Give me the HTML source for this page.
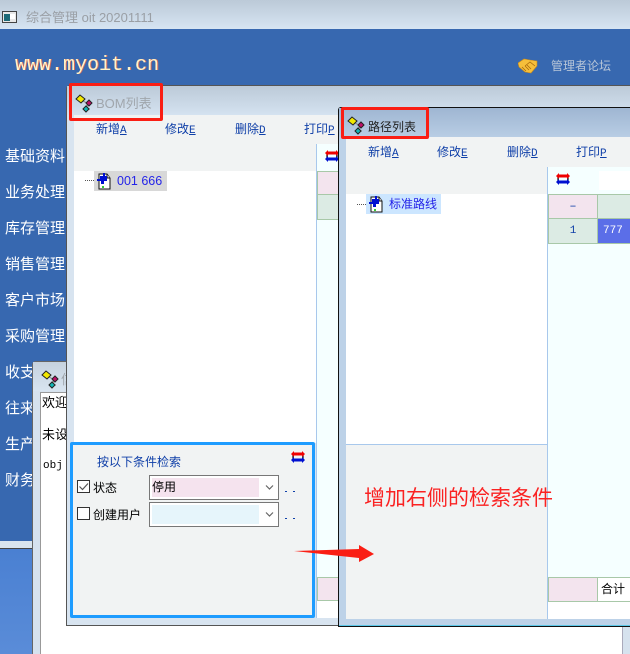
<!DOCTYPE html>
<html>
<head>
<meta charset="utf-8">
<style>
html,body{margin:0;padding:0;width:630px;height:654px;overflow:hidden}
body{position:relative;background:#3768b0;font-family:"Liberation Sans","WenQuanYi Zen Hei","Noto Sans CJK SC",sans-serif;font-size:13px}
div,svg,span{position:absolute;box-sizing:border-box}
.t{white-space:nowrap;line-height:16px}
.nav{left:5px;color:#fff;font-size:15px;line-height:18px;white-space:nowrap}
.tb{color:#0f3fa8;font-size:12px;line-height:14px;white-space:nowrap;font-family:"WenQuanYi Zen Hei","Noto Sans CJK SC",sans-serif}
.tb u{font-family:"Liberation Mono",monospace;font-size:11px}
</style>
</head>
<body>
<svg width="0" height="0" style="left:0;top:0">
<defs>
<g id="ico">
<path d="M6 6 L12 9 V15 H15 M12 12 L16 9" stroke="#8a8a8a" fill="none" stroke-width="1"/>
<path d="M1 5 L5 1 L10 5 L6 9 Z" fill="#f2e800" stroke="#222" stroke-width="1"/>
<path d="M11 9 L14 6 L17 9 L14 12 Z" fill="#c0106a" stroke="#222" stroke-width="1"/>
<path d="M8 15 L11 12 L14 15 L11 18 Z" fill="#10b8b8" stroke="#222" stroke-width="1"/>
</g>
<g id="swap">
<path d="M2 3 H12 V9 H2 Z" fill="none" stroke="#111" stroke-width="1.2"/>
<path d="M0 3 L3 0 V1.5 H11 V0 L14 3 L11 6 V4.5 H3 V6 Z" fill="#f00000"/>
<path d="M0 9 L3 6 V7.5 H11 V6 L14 9 L11 12 V10.5 H3 V12 Z" fill="#0010d0"/>
</g>
<g id="doc">
<path d="M2 1 H10 L13 5 V16 H2 Z" fill="#fff" stroke="#111" stroke-width="1"/>
<path d="M10 1 V5 H13" fill="#ddd" stroke="#111" stroke-width="1"/>
<path d="M0 6 H3 V3 H6 V0 H8 V3 H10 V8 H7 V11 H4 V8 H0 Z" fill="#0010d0"/>
<rect x="5" y="13" width="2" height="2" fill="#3c3"/>
</g>
</defs>
</svg>

<!-- app title -->
<div style="left:0;top:0;width:630px;height:29px;background:linear-gradient(#bccad8,#d6e4f2)"></div>
<svg style="left:2px;top:11px" width="15" height="12"><rect x=".5" y=".5" width="14" height="11" fill="#e8e8e8" stroke="#444"/><rect x="2" y="3" width="6" height="7" fill="#1c6a78"/><rect x="8" y="3" width="5" height="5" fill="#fff"/></svg>
<div class="t" style="left:26px;top:10px;color:#9a9fa5;font-size:13px">综合管理 oit 20201111</div>

<!-- header -->
<div class="t" style="left:15px;top:55px;font-family:'Liberation Mono',monospace;font-size:20px;line-height:22px;color:#fff4c8;text-shadow:1px 0 0 #d86a5a">www.myoit.cn</div>
<svg style="left:518px;top:58px" width="20" height="16"><path d="M0 5 L6 1 L12 2 L19 3 L19 8 L13 15 L7 14 L1 9 Z" fill="#f6bf3a" stroke="#c98a1a" stroke-width=".6"/><path d="M7 8 L12 4 L17 8 M4 9 L8 13 M7 8 L11 12 M9 7 L13 11" stroke="#a8690d" fill="none" stroke-width=".8"/></svg>
<div class="t" style="left:551px;top:58px;color:#b8c6d8;font-size:12px">管理者论坛</div>

<!-- sidebar -->
<div class="nav" style="top:148px">基础资料</div>
<div class="nav" style="top:184px">业务处理</div>
<div class="nav" style="top:220px">库存管理</div>
<div class="nav" style="top:256px">销售管理</div>
<div class="nav" style="top:292px">客户市场</div>
<div class="nav" style="top:328px">采购管理</div>
<div class="nav" style="top:364px">收支</div>
<div class="nav" style="top:400px">往来</div>
<div class="nav" style="top:436px">生产</div>
<div class="nav" style="top:472px">财务</div>

<!-- lower strip -->
<div style="left:0;top:541px;width:40px;height:7px;background:#d8e4ee"></div>
<div style="left:0;top:548px;width:40px;height:1px;background:#444"></div>
<div style="left:0;top:549px;width:40px;height:105px;background:linear-gradient(#4a80d2,#5a8cd8)"></div>

<!-- welcome window -->
<div style="left:32px;top:361px;width:598px;height:293px;background:#d6e2ee;border:1px solid #666;border-width:1px 0 0 1px;border-radius:4px 0 0 0"></div>
<div style="left:33px;top:362px;width:40px;height:29px;background:linear-gradient(#c6d2de,#d8e4f0)"></div>
<svg style="left:41px;top:370px" width="18" height="19"><use href="#ico"/></svg>
<div class="t" style="left:61px;top:372px;color:#a0a6ac;font-size:13px">信</div>
<div style="left:40px;top:392px;width:582px;height:262px;background:#fff;border-left:1px solid #999;border-top:1px solid #999"></div>
<div style="left:622px;top:627px;width:8px;height:27px;background:#d6e2ee;border-left:1px solid #aab"></div>
<div class="t" style="left:42px;top:395px;color:#000">欢迎</div>
<div class="t" style="left:42px;top:427px;color:#000">未设</div>
<div class="t" style="left:43px;top:458px;color:#000;font-family:'Liberation Mono',monospace;font-size:11px">obj</div>

<!-- BOM window -->
<div style="left:66px;top:85px;width:564px;height:541px;background:#d8e4f0;border:1px solid #555;border-right:0;border-radius:4px 0 0 0"></div>
<div style="left:67px;top:86px;width:563px;height:29px;background:linear-gradient(#bccad8,#d4e2f0)"></div>
<svg style="left:75px;top:94px" width="18" height="19"><use href="#ico"/></svg>
<div class="t" style="left:96px;top:96px;color:#a0a6ac;font-size:13px">BOM列表</div>
<div style="left:74px;top:115px;width:264px;height:56px;background:#f1f3f3"></div>
<div class="tb" style="left:96px;top:122px">新增<u>A</u></div>
<div class="tb" style="left:165px;top:122px">修改<u>E</u></div>
<div class="tb" style="left:235px;top:122px">删除<u>D</u></div>
<div class="tb" style="left:304px;top:122px">打印<u>P</u></div>
<div style="left:74px;top:171px;width:242px;height:272px;background:#fff"></div>
<div style="left:316px;top:144px;width:1px;height:474px;background:#a8c8ec"></div>
<div style="left:317px;top:144px;width:21px;height:474px;background:#f5ffff"></div>
<svg style="left:325px;top:150px" width="14" height="12"><use href="#swap"/></svg>
<div style="left:85px;top:180px;width:9px;border-top:1px dotted #555"></div>
<div style="left:94px;top:171px;width:73px;height:20px;background:#d8d8d8"></div>
<svg style="left:97px;top:173px" width="14" height="17"><use href="#doc"/></svg>
<div class="t" style="left:117px;top:173px;color:#2424e8;font-size:12.5px">001 666</div>
<div style="left:317px;top:171px;width:21px;height:24px;background:#f3e4ee;border:1px solid #a8c8a8;border-right:0"></div>
<div style="left:317px;top:195px;width:21px;height:25px;background:#dcebe4;border:1px solid #a8c8a8;border-top:0;border-right:0"></div>
<div style="left:317px;top:577px;width:21px;height:24px;background:#f3e4ee;border:1px solid #a8c8a8;border-right:0"></div>
<div style="left:317px;top:601px;width:21px;height:17px;background:#fff"></div>

<!-- search panel -->
<div style="left:70px;top:442px;width:245px;height:176px;background:#f1f3f3;border:3px solid #1e9cff;border-radius:2px"></div>
<div class="t" style="left:97px;top:454px;color:#0f3fa8;font-size:12px">按以下条件检索</div>
<svg style="left:291px;top:451px" width="14" height="12"><use href="#swap"/></svg>
<div style="left:77px;top:480px;width:13px;height:13px;background:#fff;border:1px solid #333"></div>
<svg style="left:77px;top:480px" width="13" height="13"><path d="M2.5 6.5 L5.5 9.5 L11 3.5" fill="none" stroke="#555" stroke-width="1.2"/></svg>
<div class="t" style="left:93px;top:480px;color:#000;font-size:12px">状态</div>
<div style="left:77px;top:507px;width:13px;height:13px;background:#fff;border:1px solid #333"></div>
<div class="t" style="left:93px;top:507px;color:#000;font-size:12px">创建用户</div>
<div style="left:149px;top:475px;width:130px;height:25px;background:#fff;border:1px solid #777"></div>
<div style="left:152px;top:478px;width:107px;height:19px;background:#f5e3ee"></div>
<div class="t" style="left:152px;top:479px;color:#000;font-size:12px">停用</div>
<svg style="left:264px;top:484px" width="11" height="7"><path d="M2 1.5 L5.5 5 L9 1.5" fill="none" stroke="#666" stroke-width="1.2"/></svg>
<div style="left:149px;top:502px;width:130px;height:25px;background:#fff;border:1px solid #777"></div>
<div style="left:152px;top:505px;width:107px;height:19px;background:#e6f5fb"></div>
<svg style="left:264px;top:511px" width="11" height="7"><path d="M2 1.5 L5.5 5 L9 1.5" fill="none" stroke="#666" stroke-width="1.2"/></svg>
<div style="left:285px;top:491px;width:2px;height:1px;background:#0f3fa8"></div>
<div style="left:293px;top:491px;width:2px;height:1px;background:#0f3fa8"></div>
<div style="left:285px;top:518px;width:2px;height:1px;background:#0f3fa8"></div>
<div style="left:293px;top:518px;width:2px;height:1px;background:#0f3fa8"></div>

<!-- route window -->
<div style="left:338px;top:107px;width:292px;height:520px;background:#bdd2e8;border:1px solid #111;border-right:0;border-radius:3px 0 0 0"></div>
<div style="left:339px;top:108px;width:291px;height:29px;background:linear-gradient(#9fb6d2,#b8cde4)"></div>
<div style="left:339px;top:625px;width:291px;height:1px;background:#5cc8e8"></div>
<svg style="left:347px;top:116px" width="18" height="19"><use href="#ico"/></svg>
<div class="t" style="left:368px;top:119px;color:#222;font-size:12px">路径列表</div>
<div style="left:346px;top:137px;width:284px;height:57px;background:#f1f3f3"></div>
<div class="tb" style="left:368px;top:145px">新增<u>A</u></div>
<div class="tb" style="left:437px;top:145px">修改<u>E</u></div>
<div class="tb" style="left:507px;top:145px">删除<u>D</u></div>
<div class="tb" style="left:576px;top:145px">打印<u>P</u></div>
<div style="left:346px;top:194px;width:201px;height:250px;background:#fff"></div>
<div style="left:346px;top:444px;width:201px;height:1px;background:#a8c8ec"></div>
<div style="left:346px;top:445px;width:201px;height:174px;background:#f1f3f3"></div>
<div style="left:547px;top:167px;width:1px;height:452px;background:#a8c8ec"></div>
<div style="left:548px;top:167px;width:82px;height:452px;background:#f5ffff"></div>
<div style="left:357px;top:204px;width:9px;border-top:1px dotted #555"></div>
<div style="left:366px;top:194px;width:75px;height:20px;background:#cce6ff"></div>
<svg style="left:369px;top:196px" width="14" height="17"><use href="#doc"/></svg>
<div class="t" style="left:389px;top:196px;color:#2424e8;font-size:12px">标准路线</div>
<svg style="left:556px;top:173px" width="14" height="12"><use href="#swap"/></svg>
<div style="left:599px;top:171px;width:31px;height:19px;background:#fff"></div>
<div style="left:548px;top:194px;width:82px;height:50px;background:#a8c8a8"></div>
<div style="left:549px;top:195px;width:48px;height:23px;background:#f3e4ee;color:#0f3fa8;text-align:center;line-height:23px;font-size:12px;font-family:'Liberation Mono',monospace">–</div>
<div style="left:598px;top:195px;width:32px;height:23px;background:#dcebe4"></div>
<div style="left:549px;top:219px;width:48px;height:24px;background:#dcebe4;color:#0f3fa8;text-align:center;line-height:24px;font-size:11px;font-family:'Liberation Mono',monospace">1</div>
<div style="left:598px;top:219px;width:32px;height:24px;background:#5b6ee8;color:#fff;padding-left:5px;line-height:24px;font-size:11px;font-family:'Liberation Mono',monospace">777</div>
<div style="left:548px;top:577px;width:82px;height:25px;background:#a8c8a8"></div>
<div style="left:549px;top:578px;width:48px;height:23px;background:#f3e4ee"></div>
<div style="left:598px;top:578px;width:32px;height:23px;background:#fff;color:#000;line-height:23px;font-size:12px;padding-left:3px">合计</div>
<div style="left:548px;top:602px;width:82px;height:17px;background:#fff"></div>

<!-- annotations -->
<div style="left:69px;top:83px;width:94px;height:38px;border:3px solid #fa1e14;border-radius:2px"></div>
<div style="left:341px;top:107px;width:88px;height:32px;border:3px solid #fa1e14;border-radius:2px"></div>
<div class="t" style="left:364px;top:487px;color:#fa2222;font-size:21px;line-height:24px">增加右侧的检索条件</div>
<svg style="left:293px;top:544px" width="82" height="20"><path d="M1 7 L66 5 L66 1 L81 10 L66 18 L66 14 Z" fill="#fa1e14"/></svg>
</body>
</html>
